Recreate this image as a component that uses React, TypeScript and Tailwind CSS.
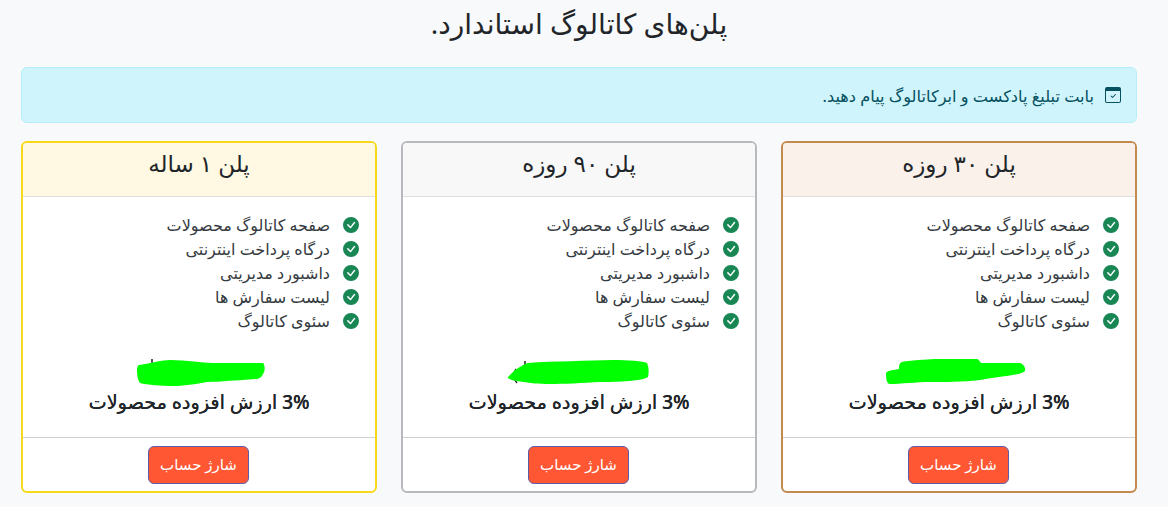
import React from "react";

const features = ["صفحه کاتالوگ محصولات", "درگاه پرداخت اینترنتی", "داشبورد مدیریتی", "لیست سفارش ها", "سئوی کاتالوگ"];

function Check() {
  return (
    <svg width="16" height="16" viewBox="0 0 16 16" fill="#198754" className="shrink-0">
      <path d="M16 8A8 8 0 1 1 0 8a8 8 0 0 1 16 0zm-3.97-3.03a.75.75 0 0 0-1.08.022L7.477 9.417 5.384 7.323a.75.75 0 0 0-1.06 1.06L6.97 11.03a.75.75 0 0 0 1.079-.02l3.992-4.99a.75.75 0 0 0-.01-1.05z" />
    </svg>
  );
}

const plans = [
  {
    title: "پلن ۳۰ روزه",
    border: "border-[#c28a4e]",
    head: "bg-[#f9f1ea]",
    shift: "translate-x-[-3px]",
    marks: "",
    blob: "M0 16 C2 13 8 13 13 12 C13 7 14 5 18 4.5 C30 3 45 2 51 2 L91 2 C93 2 94 6 96 6 L134 6 C138 7 140 12 139 14 C135 18 125 18 94 23 C75 25 60 25 44 25 C30 25 15 27 4 27 C1 27 0 23 0 16 Z",
  },
  {
    title: "پلن ۹۰ روزه",
    border: "border-[#b7b9bc]",
    head: "bg-[#f8f8f8]",
    shift: "translate-x-[-1px]",
    marks: "M17 4 V11 M8 12 C5 16 5 22 9 26",
    blob: "M0 20 C3 17 6 14 7 13 C12 10 16 7 20 6 C45 4 80 4 105 3 C120 3 135 4 139 6 C141 10 141 16 140 20 C135 24 110 25 92 25 C75 26 55 27 42 27 C30 27 22 26 15 25 C8 24 2 23 0 21 Z",
  },
  {
    title: "پلن ۱ ساله",
    border: "border-[#f7d91c]",
    head: "bg-[#fff9e3]",
    shift: "translate-x-[8px]",
    marks: "M15 2 V6",
    blob: "M0 13 C0 10 1 8 2 8 C15 6 25 3 33 3 C50 3 65 6 76 6 L126 6 C128 8 128 13 127 15 C125 20 122 22 120 22 C100 23 85 25 70 25 C60 27 45 29 36 29 C25 29 10 28 3 26 C1 24 0 18 0 13 Z",
  },
];

export default function App() {
  return (
    <div dir="rtl" className="min-h-[507px] bg-[#f8f9fa] pl-[21px] pr-[31px] text-[#212529] font-['Noto_Sans','DejaVu_Sans',sans-serif]">
      <h1 className="h-[67px] pt-[4px] text-center text-[28px] leading-[38px] font-normal">پلن‌های کاتالوگ استاندارد.</h1>
      <div className="flex h-[56px] items-center gap-[11px] rounded-[6px] border border-[#b6effb] bg-[#cff4fc] px-[15px] text-[16.2px] text-[#055160]">
        <svg width="16" height="16" viewBox="0 0 16 16" fill="currentColor" className="shrink-0">
          <path d="M10.854 7.146a.5.5 0 0 1 0 .708l-3 3a.5.5 0 0 1-.708 0l-1.5-1.5a.5.5 0 1 1 .708-.708L7.5 9.793l2.646-2.647a.5.5 0 0 1 .708 0z" />
          <path d="M2 0h12a2 2 0 0 1 2 2v12a2 2 0 0 1-2 2H2a2 2 0 0 1-2-2V2a2 2 0 0 1 2-2zM1 4v10a1 1 0 0 0 1 1h12a1 1 0 0 0 1-1V4H1z" />
        </svg>
        <span className="pt-[2px]">بابت تبلیغ پادکست و ابرکاتالوگ پیام دهید.</span>
      </div>
      <div className="mt-[18px] grid grid-cols-3 gap-[24px]">
        {plans.map((p) => (
          <div key={p.title} className={`flex h-[352px] flex-col overflow-hidden rounded-[6px] border-2 bg-white ${p.border}`}>
            <div className={`h-[54px] border-b border-[#dfdfdf] pt-[2px] text-center text-[23px] leading-[36px] ${p.head}`}>{p.title}</div>
            <div className="flex-1 px-[16px] pt-[16px]">
              <ul className="flex flex-col">
                {features.map((f) => (
                  <li key={f} className="flex h-[24px] items-center gap-[13px] text-[16px] text-[#343a40]">
                    <Check />
                    <span>{f}</span>
                  </li>
                ))}
              </ul>
              <div className="mt-[24px] flex h-[28px] justify-center">
                <svg width="140" height="30" viewBox="0 0 140 30" className={`block overflow-visible ${p.shift}`}>
                  {p.marks && <path d={p.marks} fill="none" stroke="#222" strokeWidth="1.5" />}
                  <path d={p.blob} fill="#00ff00" />
                </svg>
              </div>
              <div className="mt-[3px] text-center text-[19.2px] leading-[28px] font-medium [text-shadow:0.2px_0_0_currentColor]">3% ارزش افزوده محصولات</div>
            </div>
            <div className="flex h-[54px] items-center justify-center border-t border-[#d0d0d0] pr-px">
              <button className="h-[38px] w-[101px] rounded-[6px] border border-[#5c5ca8] bg-[#ff5733] text-[15px] text-white">شارژ حساب</button>
            </div>
          </div>
        ))}
      </div>
    </div>
  );
}
